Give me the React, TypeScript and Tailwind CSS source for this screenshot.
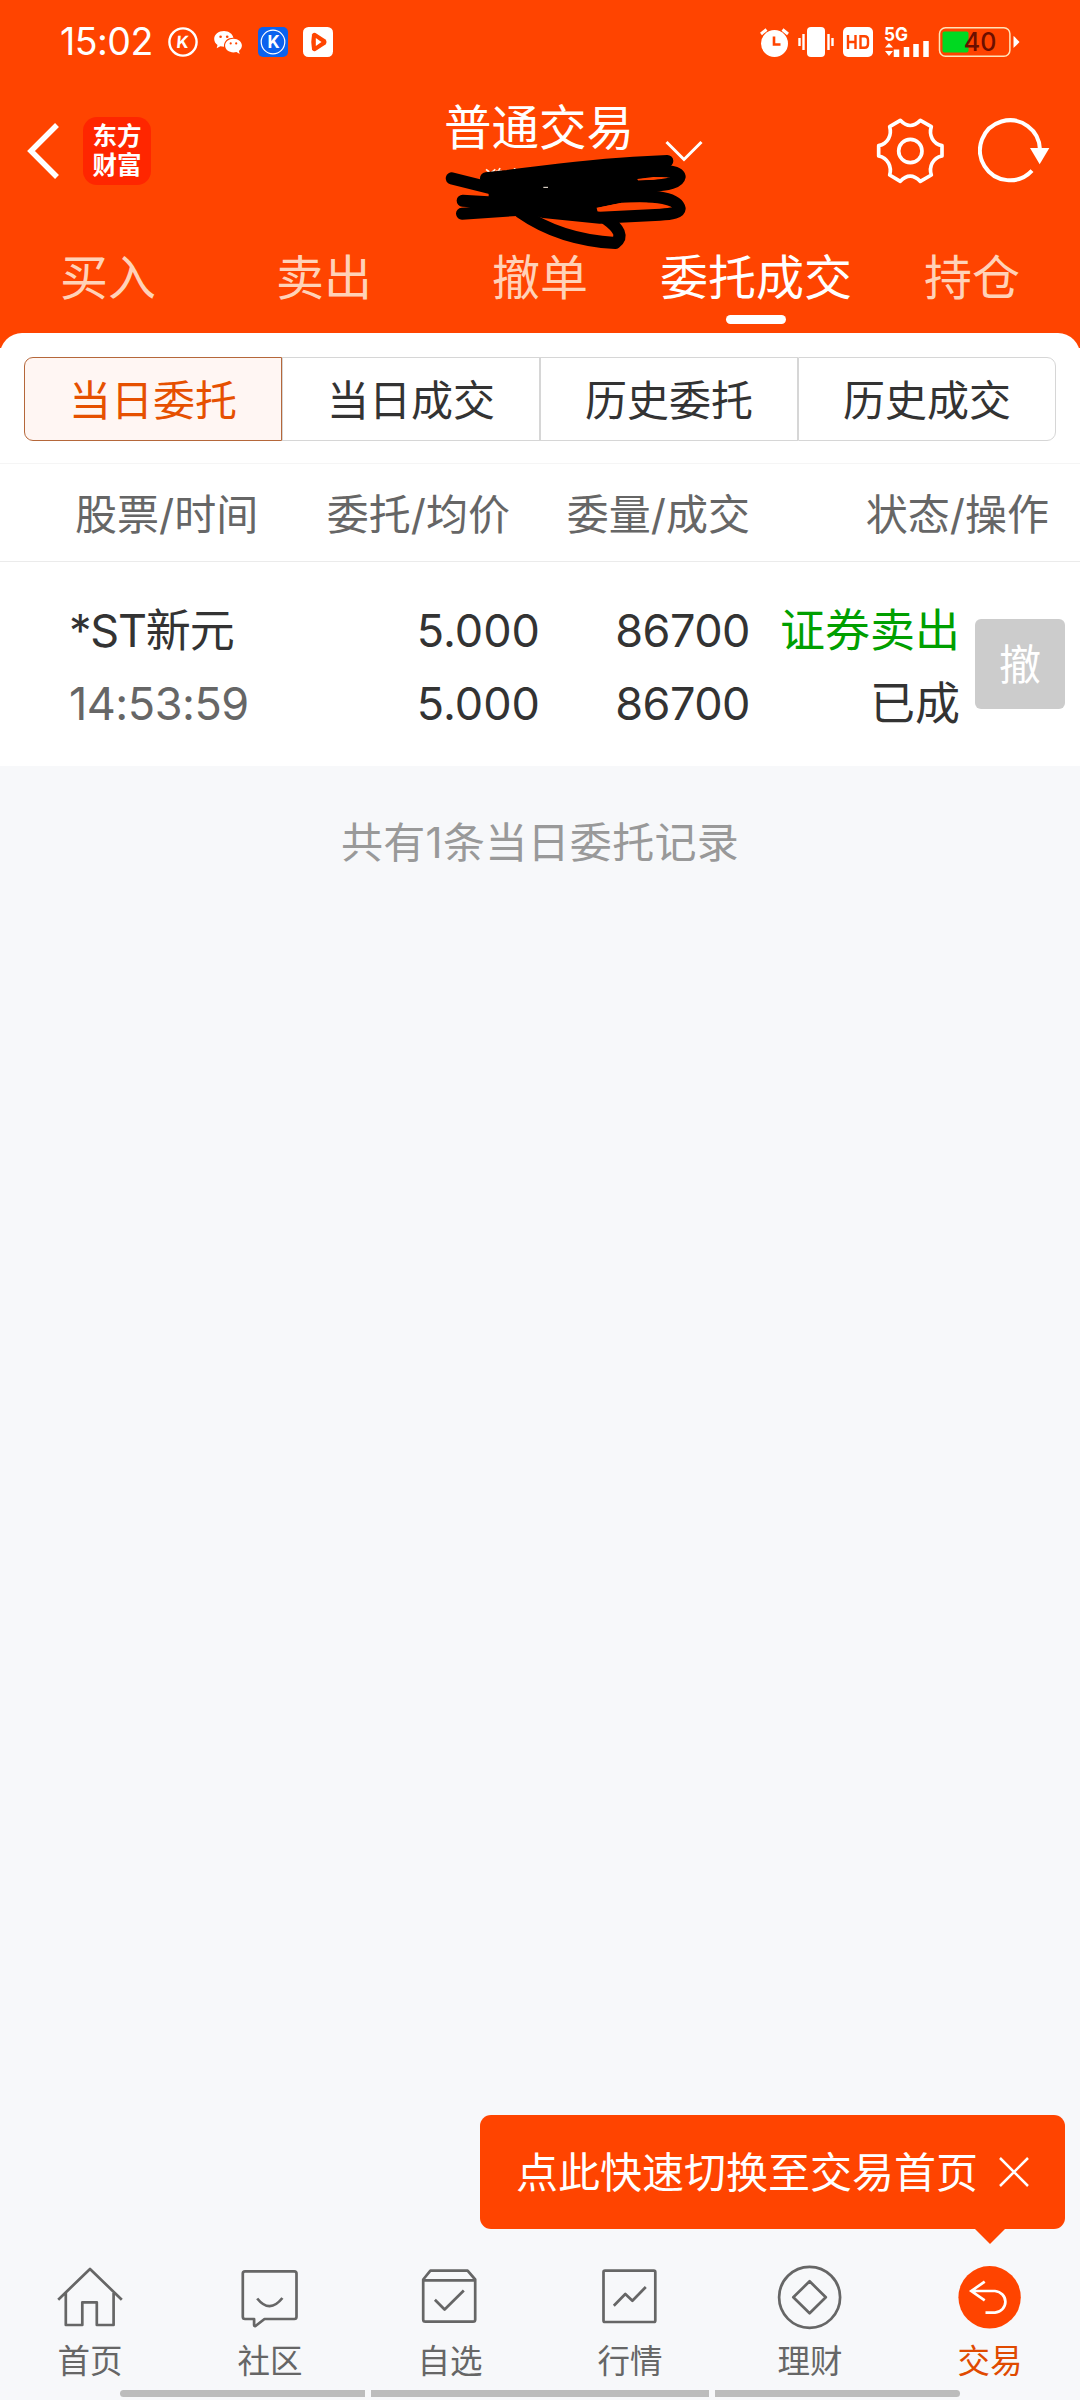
import { useState, type ReactNode } from 'react';

type Segment = '当日委托' | '当日成交' | '历史委托' | '历史成交';

const TABS = ['买入', '卖出', '撤单', '委托成交', '持仓'];
const SEGMENTS: Segment[] = ['当日委托', '当日成交', '历史委托', '历史成交'];

const ORDERS = [
  { name: '*ST新元', time: '14:53:59', price: '5.000', avgPrice: '5.000', volume: '86700', filled: '86700', side: '证券卖出', status: '已成' },
];

function StatusBar() {
  return (
    <div className="flex h-[84px] shrink-0 items-center pl-[60px] pr-[60px] text-white">
      <span className="w-[108px] text-[37.500px] leading-none tracking-[-0.5px]">15:02</span>
      <svg className="h-[30px] w-[30px]" viewBox="0 0 30 30" fill="none">
        <circle cx="15" cy="15" r="13.600" stroke="currentColor" strokeWidth="2.400" />
        <text x="15" y="21" textAnchor="middle" fontSize="17" fontWeight="700" fill="currentColor" transform="skewX(-5) translate(1 0)">K</text>
      </svg>
      <svg className="ml-[15px] h-[26px] w-[30px]" viewBox="0 0 30 26">
        <path fill="currentColor" d="M11 2C5.500 2 1.200 5.400 1.200 10c0 2.500 1.300 4.500 3.300 6l-.8 3.200 3.600-1.900c1.200.3 2.500.5 3.700.5C10.500 11.900 15 8.600 20.400 8.700 19.500 4.800 15.600 2 11 2Z" />
        <path fill="currentColor" d="M20.500 9.700c-4.800 0-8.400 3-8.400 6.900 0 3.900 3.700 6.900 8.400 6.900 1 0 2-.2 2.900-.4l3.300 1.800-.8-2.900c1.800-1.300 3-3.200 3-5.400 0-3.900-3.700-6.900-8.400-6.900Z" />
        <g fill="#ff4400">
          <circle cx="7.600" cy="7.800" r="1.300" />
          <circle cx="14.200" cy="7.800" r="1.300" />
          <circle cx="17.700" cy="14.400" r="1.100" />
          <circle cx="23.200" cy="14.400" r="1.100" />
        </g>
      </svg>
      <svg className="ml-[15px] h-[30px] w-[30px]" viewBox="0 0 30 30" fill="none">
        <rect width="30" height="30" rx="5" fill="#0b62ee" />
        <circle cx="15" cy="15" r="11.800" stroke="currentColor" strokeWidth="1.200" />
        <text x="15.500" y="21" textAnchor="middle" fontSize="17" fontWeight="700" fill="currentColor">K</text>
      </svg>
      <svg className="ml-[15px] h-[30px] w-[30px]" viewBox="0 0 30 30">
        <rect width="30" height="30" rx="5.500" fill="currentColor" />
        <path d="M9 7.500Q10 5 12.500 6L22.500 12.500Q24.500 15 22.500 17.500L12.500 24Q10 25 9 22.500Q7.500 15 9 7.500Z" fill="#ff4400" />
        <path d="M12.800 11L18.500 15L12.800 19Z" fill="currentColor" />
      </svg>

      <svg className="ml-auto h-[30px] w-[30px]" viewBox="0 0 30 30" fill="none">
        <circle cx="14.500" cy="16.500" r="13.500" fill="currentColor" />
        <path d="M1 7L6.500 2.500M28 7L22.500 2.500" stroke="currentColor" strokeWidth="3" />
        <path d="M14 9.500V17.500H20.500" stroke="#ff4400" strokeWidth="2.600" />
      </svg>
      <svg className="ml-[8px] h-[30px] w-[36px]" viewBox="0 0 36 30">
        <rect x="9" y="0" width="18" height="30" rx="4" fill="currentColor" />
        <path d="M5.500 7V23M30.500 7V23M1.500 11V19M34.500 11V19" stroke="currentColor" strokeWidth="2.400" />
      </svg>
      <svg className="ml-[9px] h-[30px] w-[30px]" viewBox="0 0 30 30" fill="none">
        <rect width="30" height="30" rx="5" fill="currentColor" />
        <path d="M5 8V22M12.500 8V22M5 15H12.500M17.500 9.200H21.500Q25 9.200 25 13V17Q25 20.800 21.500 20.800H17.500Z" stroke="#ff4400" strokeWidth="2.400" />
      </svg>
      <svg className="ml-[11px] h-[30px] w-[46px] overflow-visible" viewBox="0 0 46 30">
        <text x="0" y="14" fontSize="19" fontWeight="700" fill="currentColor" textLength="24" lengthAdjust="spacingAndGlyphs">5G</text>
        <path d="M1 20.500L5 16L9 20.500ZM1 24L5 29L9 24Z" fill="currentColor" />
        <path d="M12.500 30V22.500M22.500 30V20M32 30V17M42 30V14" stroke="currentColor" strokeWidth="5.500" />
      </svg>
      <svg className="ml-[8px] h-[30px] w-[82px]" viewBox="0 0 82 30">
        <rect x="1.500" y="0.800" width="70.400" height="28.400" rx="6" fill="none" stroke="#ffe3b8" strokeWidth="1.500" />
        <rect x="4.500" y="4.500" width="26" height="21" rx="2" fill="#00d921" />
        <path d="M75.500 9Q76 9 81.500 15Q76 21 75.500 21Z" fill="currentColor" />
        <text x="42" y="23.500" textAnchor="middle" fontSize="25" fontWeight="500" fill="#6b0f00">40</text>
      </svg>
    </div>
  );
}

// hand-drawn strokes that hide the account number
function Scribble() {
  return (
    <svg className="absolute left-[420px] top-[80px] h-[180px] w-[300px]" viewBox="0 0 900 540" fill="none">
      <path d="M198 268L208 276M214 278L226 268M232 280L240 264M228 274H246M284 264V272" stroke="#fff4e6" strokeWidth="5" />
      <g stroke="#000" strokeWidth="36" strokeLinecap="round" strokeLinejoin="round">
        <path d="M95 295L215 325" />
        <path d="M198 295L262 288Q480 258 640 248L742 243" />
        <path d="M640 282Q772 262 779 290Q775 314 690 318L500 340" />
        <path d="M128 362L230 368M126 401L290 390" />
        <path d="M520 362L600 351Q770 340 779 386Q778 402 720 404L540 413L370 396" />
        <path d="M300 396Q420 480 586 489Q622 462 556 415" />
      </g>
      <path d="M205 290L300 270L640 245L742 243L652 296L654 301L735 300L690 345L605 368L530 384L540 425L360 411L280 405L200 380L206 348Z" fill="#000" />
      <path d="M652 297L700 291L738 292L700 299L654 301ZM528 384L605 368H680L740 379L736 384L640 386Z" fill="#ff4400" />
      <path d="M370 322H384" stroke="#fff4e6" strokeWidth="3" />
    </svg>
  );
}

function TitleBar() {
  return (
    <div className="flex h-[134px] shrink-0 items-center pl-[26px] pr-[30px] text-white">
      <svg className="h-[56px] w-[34px]" viewBox="0 0 34 56" fill="none" stroke="currentColor" strokeWidth="5.500">
        <path d="M31 2L5 28L31 54" />
      </svg>
      <div className="ml-[23px] flex h-[68px] w-[68px] flex-col items-center justify-center rounded-[14px] bg-[#ff2600] text-[24.500px] font-bold leading-[29px]">
        <span>东方</span>
        <span>财富</span>
      </div>
      <div className="ml-[293px] pb-[47px] text-[47.500px] leading-[54px]">普通交易</div>
      <svg className="ml-[31px] h-[22px] w-[38px]" viewBox="0 0 38 22" fill="none" stroke="currentColor" strokeWidth="3">
        <path d="M1.500 2L19 19.500L36.500 2" />
      </svg>
      <svg className="ml-auto h-[66px] w-[68px]" viewBox="-2 -1 204 198" fill="none" stroke="currentColor" strokeWidth="11" strokeLinejoin="round">
        <path d="M39 25L71 6Q100 37 131 6L164 25C156 50 168 76 196 82V113C168 119 156 145 164 170L131 189Q100 158 71 189L39 170C46 145 34 119 6 113V82C34 76 46 50 39 25Z" />
        <circle cx="101" cy="98" r="35" />
      </svg>
      <svg className="ml-[34px] h-[66px] w-[72px]" viewBox="0 0 216 198" fill="none">
        <path d="M186 95A90 90 0 1 0 162 158" stroke="currentColor" strokeWidth="12" />
        <path d="M156 90H214L185 139Z" fill="currentColor" />
      </svg>
    </div>
  );
}

function NavItem({ label, active = false, children }: { label: string; active?: boolean; children: ReactNode }) {
  return (
    <button className={`flex w-[180px] flex-col items-center ${active ? 'text-[#e04a00]' : 'text-[#666]'}`}>
      <svg className="h-[72px] w-[72px]" viewBox="0 0 72 72" fill="none" stroke="currentColor" strokeWidth="2.700" strokeLinejoin="round">
        {children}
      </svg>
      <span className="mt-[7px] text-[32.500px] leading-[42px]">{label}</span>
    </button>
  );
}

function BottomNav() {
  return (
    <nav className="flex h-[128px] shrink-0">
      <NavItem label="首页">
        <path d="M4.200 37.700L36 7L67.800 37.700M11.800 31V63H28.300V40.300H42.800V63H59.600V31" />
      </NavItem>
      <NavItem label="社区">
        <path d="M11 9.300H60.300Q62.500 9.300 62.500 11.500V54.800Q62.500 57 60.300 57H30.500L21.500 64Q20.100 64.500 20.100 63V57H11Q8.800 57 8.800 54.800V11.500Q8.800 9.300 11 9.300Z" />
        <path d="M23.200 36.500Q35.600 52 48.400 36" />
      </NavItem>
      <NavItem label="自选">
        <path d="M9.200 17.500L16.400 8.700H53.600L61.200 17.500V57.500Q61.200 59.700 59 59.700H11.400Q9.200 59.700 9.200 57.500ZM9.200 18.300H61.200" />
        <path d="M20.900 37.700L30.600 47.500L49.800 28.500" />
      </NavItem>
      <NavItem label="行情">
        <rect x="9.500" y="8.700" width="51.800" height="51.300" rx="1.500" />
        <path d="M19.800 43.700L31.300 32L38.400 38.700L51.800 25" />
      </NavItem>
      <NavItem label="理财">
        <circle cx="35.600" cy="35.300" r="30.500" />
        <path d="M35.600 19.300L51.800 35.300L35.600 51.300L19.300 35.300Z" />
      </NavItem>
      <NavItem label="交易" active>
        <circle cx="35.600" cy="35.300" r="31.200" fill="#ff4400" stroke="none" />
        <path d="M30.700 19.700L17.300 29L30.700 38.300M17.300 29H41A11.500 10.900 0 0 1 41 50.700H31.500" stroke="#fff" strokeLinejoin="miter" />
      </NavItem>
    </nav>
  );
}

export default function App() {
  const [segment, setSegment] = useState<Segment>('当日委托');
  const [hintOpen, setHintOpen] = useState(true);

  return (
    <div className="relative flex h-[2400px] w-[1080px] flex-col overflow-hidden bg-[#f7f8fa] font-['Inter','Noto_Sans_CJK_SC',sans-serif] text-[#333]">
      <header className="flex h-[348px] shrink-0 flex-col bg-[#ff4400]">
        <StatusBar />
        <TitleBar />
        <div className="grid h-[115px] shrink-0 grid-cols-5">
          {TABS.map((tab) => (
            <div key={tab} className={`flex flex-col items-center pt-[32px] text-[48px] leading-[56px] ${tab === '委托成交' ? 'text-white' : 'text-[#ffd2b8]'}`}>
              <span className="whitespace-nowrap">{tab}</span>
              {tab === '委托成交' ? <span className="mt-[9px] h-[9px] w-[60px] rounded-full bg-white" /> : null}
            </div>
          ))}
        </div>
        <div className="h-[15px] overflow-hidden">
          <div className="h-[60px] rounded-t-[22px] bg-white" />
        </div>
      </header>
      <Scribble />

      <main className="flex flex-1 flex-col">
        <section className="bg-white">
          <div className="flex h-[116px] border-b border-[#f5f5f5] px-[24px] pt-[9px]">
            {SEGMENTS.map((item) => (
              <button
                key={item}
                className={`h-[84px] w-[258px] border pt-[3px] text-[42px] first:rounded-l-[9px] last:rounded-r-[9px] ${item === segment ? 'border-[#b5673a] bg-[#fff6f3] text-[#e65000]' : 'border-[#d6d6d6]'}`}
                onClick={() => setSegment(item)}
              >
                {item}
              </button>
            ))}
          </div>

          <div className="grid h-[98px] grid-cols-[510px_240px_299px] items-center border-b border-[#ebebeb] pt-[4px] text-right text-[42px] text-[#666]">
            <div className="flex justify-between pl-[75px]">
              <span>股票/时间</span>
              <span>委托/均价</span>
            </div>
            <span>委量/成交</span>
            <span>状态/操作</span>
          </div>

          {ORDERS.map((order) => (
            <div key={order.time} className="flex h-[204px] items-center text-right text-[45px] leading-[73px]">
              <div className="w-[270px] pl-[69px] pt-[5px] text-left">
                <div className="whitespace-nowrap tracking-[-1.2px]">{order.name}</div>
                <div className="tracking-[-0.5px] text-[#666]">{order.time}</div>
              </div>
              <div className="w-[270px] pt-[5px]">
                <div>{order.price}</div>
                <div>{order.avgPrice}</div>
              </div>
              <div className="w-[210px] pt-[5px] tracking-[-0.5px]">
                <div>{order.volume}</div>
                <div>{order.filled}</div>
              </div>
              <div className="w-[210px] pt-[5px]">
                <div className="text-[#009f00]">{order.side}</div>
                <div>{order.status}</div>
              </div>
              <button className="ml-[15px] h-[90px] w-[90px] rounded-[6px] bg-[#ccc] pt-[2px] text-[42px] leading-[88px] text-white">撤</button>
            </div>
          ))}
        </section>
        <p className="pt-[47px] text-center text-[42px] leading-[60px] tracking-[0.3px] text-[#999]">共有{ORDERS.length}条当日委托记录</p>
      </main>

      {hintOpen ? (
        <div className="mb-[18px] mr-[15px] flex shrink-0 flex-col items-end">
          <div className="flex h-[114px] w-[585px] items-center rounded-[11px] bg-[#ff4400] pl-[36px] text-[42px] text-white">
            <span className="whitespace-nowrap">点此快速切换至交易首页</span>
            <button className="ml-[21px]" onClick={() => setHintOpen(false)}>
              <svg className="h-[30px] w-[30px]" viewBox="0 0 30 30" fill="none" stroke="currentColor" strokeWidth="2.500">
                <path d="M1 1L29 29M29 1L1 29" />
              </svg>
            </button>
          </div>
          <svg className="mr-[60px] h-[15px] w-[30px]" viewBox="0 0 30 15">
            <path d="M0 0H30L15 15Z" fill="#ff4400" />
          </svg>
        </div>
      ) : null}

      <BottomNav />
      <div className="mb-[3px] flex h-[7px] shrink-0 gap-[6px] px-[120px]">
        <span className="w-[245px] rounded-l-full bg-[#bcbcbc]" />
        <span className="w-[338px] bg-[#bcbcbc]" />
        <span className="w-[245px] rounded-r-full bg-[#bcbcbc]" />
      </div>
    </div>
  );
}
